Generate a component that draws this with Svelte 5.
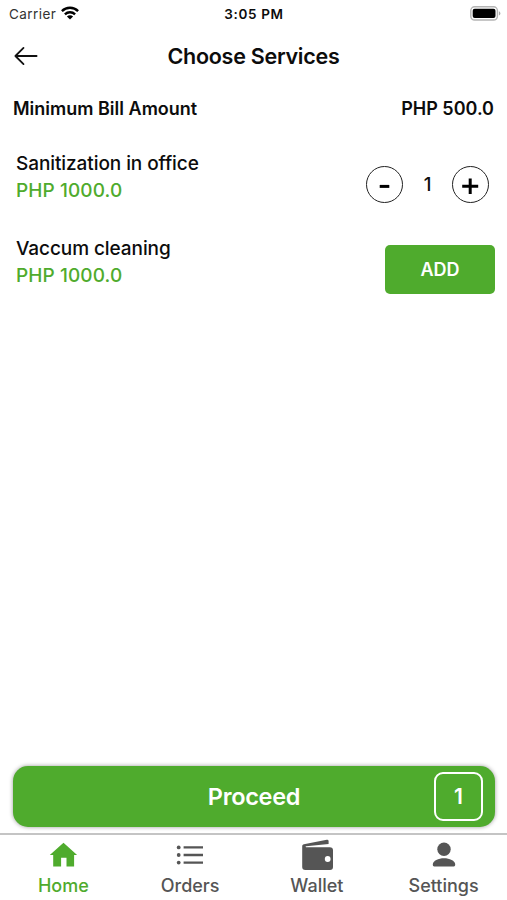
<script lang="ts">
	let services = $state([
		{ name: 'Sanitization in office', price: 'PHP 1000.0', count: 1 },
		{ name: 'Vaccum cleaning', price: 'PHP 1000.0', count: 0 },
	]);
	let total = $derived(services.reduce((sum, s) => sum + s.count, 0));

	const tabs = ['Home', 'Orders', 'Wallet', 'Settings'];
	let active = $state('Home');
</script>

<div class="screen">
	<div class="status">
		<div class="carrier">
			<span>Carrier</span>
			<svg width="18" height="14" viewBox="0 0 18 14">
				<g fill="none" stroke="#000" stroke-width="2.4">
					<path d="M0.9 5.1C5.4 0.7 12.6 0.7 17.1 5.1" />
					<path d="M3.9 8.3C6.8 5.5 11.2 5.5 14.1 8.3" />
				</g>
				<path d="M9 13.6L5.9 10.5C7.7 8.9 10.3 8.9 12.1 10.5Z" />
			</svg>
		</div>
		<span class="time">3:05 PM</span>
		<svg class="battery" width="31" height="15" viewBox="0 0 31 15">
			<rect x="0.8" y="0.8" width="26.6" height="13.2" rx="3.8" fill="#fff" stroke="#b4b4b4" stroke-width="1.4" />
			<rect x="2.7" y="2.7" width="22.8" height="9.4" rx="2" />
			<path d="M28.9 5.2Q30.4 5.8 30.4 7.4T28.9 9.6Z" fill="#aaa" />
		</svg>
	</div>

	<header>
		<button class="back" aria-label="Back">
			<svg width="24" height="20" viewBox="0 0 24 20" fill="none" stroke="#111" stroke-width="1.8" stroke-linecap="round" stroke-linejoin="round">
				<path d="M22.6 10H1.4M9.5 1.9L1.4 10L9.5 18.1" />
			</svg>
		</button>
		<h1>Choose Services</h1>
	</header>

	<div class="minimum">
		<span>Minimum Bill Amount</span>
		<span>PHP 500.0</span>
	</div>

	<main>
		{#each services as service}
			<div class="service">
				<div class="info">
					<div class="name">{service.name}</div>
					<div class="price">{service.price}</div>
				</div>
				{#if service.count > 0}
					<div class="stepper">
						<button class="round" aria-label="Remove one" onclick={() => service.count--}>
							<svg width="37" height="37" viewBox="0 0 37 37"><path d="M13.7 20.4H23.3" stroke="#000" stroke-width="3" /></svg>
						</button>
						<span class="count">{service.count}</span>
						<button class="round" aria-label="Add one" onclick={() => service.count++}>
							<svg width="37" height="37" viewBox="0 0 37 37"><path d="M10.2 20.2H26.2M18.2 12.4V28" stroke="#000" stroke-width="3" /></svg>
						</button>
					</div>
				{:else}
					<button class="add" onclick={() => service.count++}>ADD</button>
				{/if}
			</div>
		{/each}
	</main>

	<button class="proceed">
		<span class="proceed-label">Proceed</span>
		<span class="badge">{total}</span>
	</button>

	<nav>
		{#each tabs as tab}
			<button class="tab" class:active={active === tab} onclick={() => (active = tab)}>
				<svg width="34" height="34" viewBox="0 0 34 34" fill="currentColor">
					{#if tab === 'Home'}
						<path d="M17.5 4.8L31.1 17.1H28.1V28.4H20.5V19.8H15.1V28.4H7.2V17.1H3.8Z" />
					{:else if tab === 'Orders'}
						<circle cx="5.7" cy="9.4" r="1.9" />
						<circle cx="5.7" cy="17" r="1.9" />
						<circle cx="5.7" cy="24.6" r="1.9" />
						<path d="M10.6 9.4H30M10.6 17H30M10.6 24.6H30" stroke="currentColor" stroke-width="2.4" />
					{:else if tab === 'Wallet'}
						<path d="M2.6 6.6L26.8 1.8Q28.4 1.5 28.6 3V6.1L6.2 8.2Q5 8.4 6 9.2H29.8Q33 9.2 33 12.2V29Q33 32 30 32H5.4Q2.2 32 2.2 29V8Q2.2 6.8 3.6 6.4Z" />
						<circle cx="27.7" cy="21" r="2.9" fill="#fff" />
					{:else}
						<circle cx="17" cy="11.3" r="6.7" />
						<path d="M5.8 27V26.5C5.8 22.7 11.5 20.3 17 20.3S28.2 22.7 28.2 26.5V27Q28.2 28.4 26.8 28.4H7.2Q5.8 28.4 5.8 27Z" />
					{/if}
				</svg>
				<span>{tab}</span>
			</button>
		{/each}
	</nav>
</div>

<style>
	:global(body) {
		background: #fff;
	}
	.screen {
		display: flex;
		flex-direction: column;
		height: 900px;
		overflow: hidden;
		font-family: Inter, 'Liberation Sans', sans-serif;
		color: #0c0c0c;
		white-space: nowrap;
	}
	button {
		padding: 0;
		border: none;
		background: none;
		font: inherit;
		color: inherit;
	}
	svg {
		display: block;
	}

	.status {
		display: grid;
		grid-template-columns: 1fr auto 1fr;
		align-items: center;
		height: 27px;
		padding: 0 6px 0 9px;
		font-size: 13.5px;
	}
	.carrier {
		display: flex;
		align-items: center;
		gap: 5px;
		color: #333;
		letter-spacing: 0.42px;
	}
	.carrier svg {
		margin-top: -1px;
	}
	.time {
		margin-left: -2px;
		font-weight: 600;
		letter-spacing: 0.65px;
	}
	.battery {
		justify-self: end;
	}

	header {
		display: grid;
		grid-template-columns: 40px 1fr 40px;
		align-items: center;
		height: 58px;
		padding: 0 14px;
	}
	h1 {
		margin: 0;
		font-size: 21.5px;
		font-weight: 600;
		letter-spacing: -0.27px;
		text-align: center;
	}

	.minimum {
		display: flex;
		justify-content: space-between;
		align-items: center;
		height: 46px;
		padding: 0 13px;
		font-size: 18px;
		font-weight: 600;
	}

	main {
		flex: 1;
		padding-top: 11px;
	}
	.service {
		display: flex;
		justify-content: space-between;
		align-items: center;
		height: 85px;
		padding: 0 12px 0 16px;
	}
	.info {
		margin-top: -15px;
		font-size: 19px;
		line-height: 27px;
		font-weight: 500;
	}
	.name {
		letter-spacing: -0.08px;
	}
	.price {
		color: #4fab2d;
		letter-spacing: 0.1px;
	}
	.stepper {
		display: flex;
		align-items: center;
		margin: -1px 6px 0 0;
	}
	.round {
		box-sizing: border-box;
		width: 37px;
		height: 37px;
		border: 1.4px solid #222;
		border-radius: 50%;
	}
	.round svg {
		margin: -1px;
	}
	.count {
		width: 49px;
		text-align: center;
		font-size: 18.5px;
		font-weight: 500;
	}
	.add {
		width: 110px;
		height: 49px;
		border-radius: 5px;
		background: #4fab2d;
		color: #fff;
		font-size: 18px;
		font-weight: 600;
	}

	.proceed {
		display: grid;
		grid-template-columns: 49px 1fr 49px;
		align-items: center;
		height: 61px;
		margin: 0 12px 6px 13px;
		padding: 0 12px;
		border-radius: 15px;
		background: #4fab2d;
		box-shadow: 0 0 4px rgba(0, 0, 0, 0.4);
		color: #fff;
		font-weight: 600;
	}
	.proceed-label {
		grid-column: 2;
		font-size: 23.5px;
		letter-spacing: -0.3px;
	}
	.badge {
		box-sizing: border-box;
		height: 49px;
		border: 2px solid #fff;
		border-radius: 9px;
		font-size: 21px;
		line-height: 45px;
	}

	nav {
		box-sizing: border-box;
		display: grid;
		grid-template-columns: repeat(4, 1fr);
		height: 67px;
		border-top: 2px solid #c4c4c4;
	}
	.tab {
		display: flex;
		flex-direction: column;
		align-items: center;
		padding-top: 3px;
		color: #555;
		font-size: 18px;
		font-weight: 500;
	}
	.tab span {
		margin-top: 2px;
		line-height: 24px;
	}
	.active {
		color: #4fab2d;
	}
</style>
